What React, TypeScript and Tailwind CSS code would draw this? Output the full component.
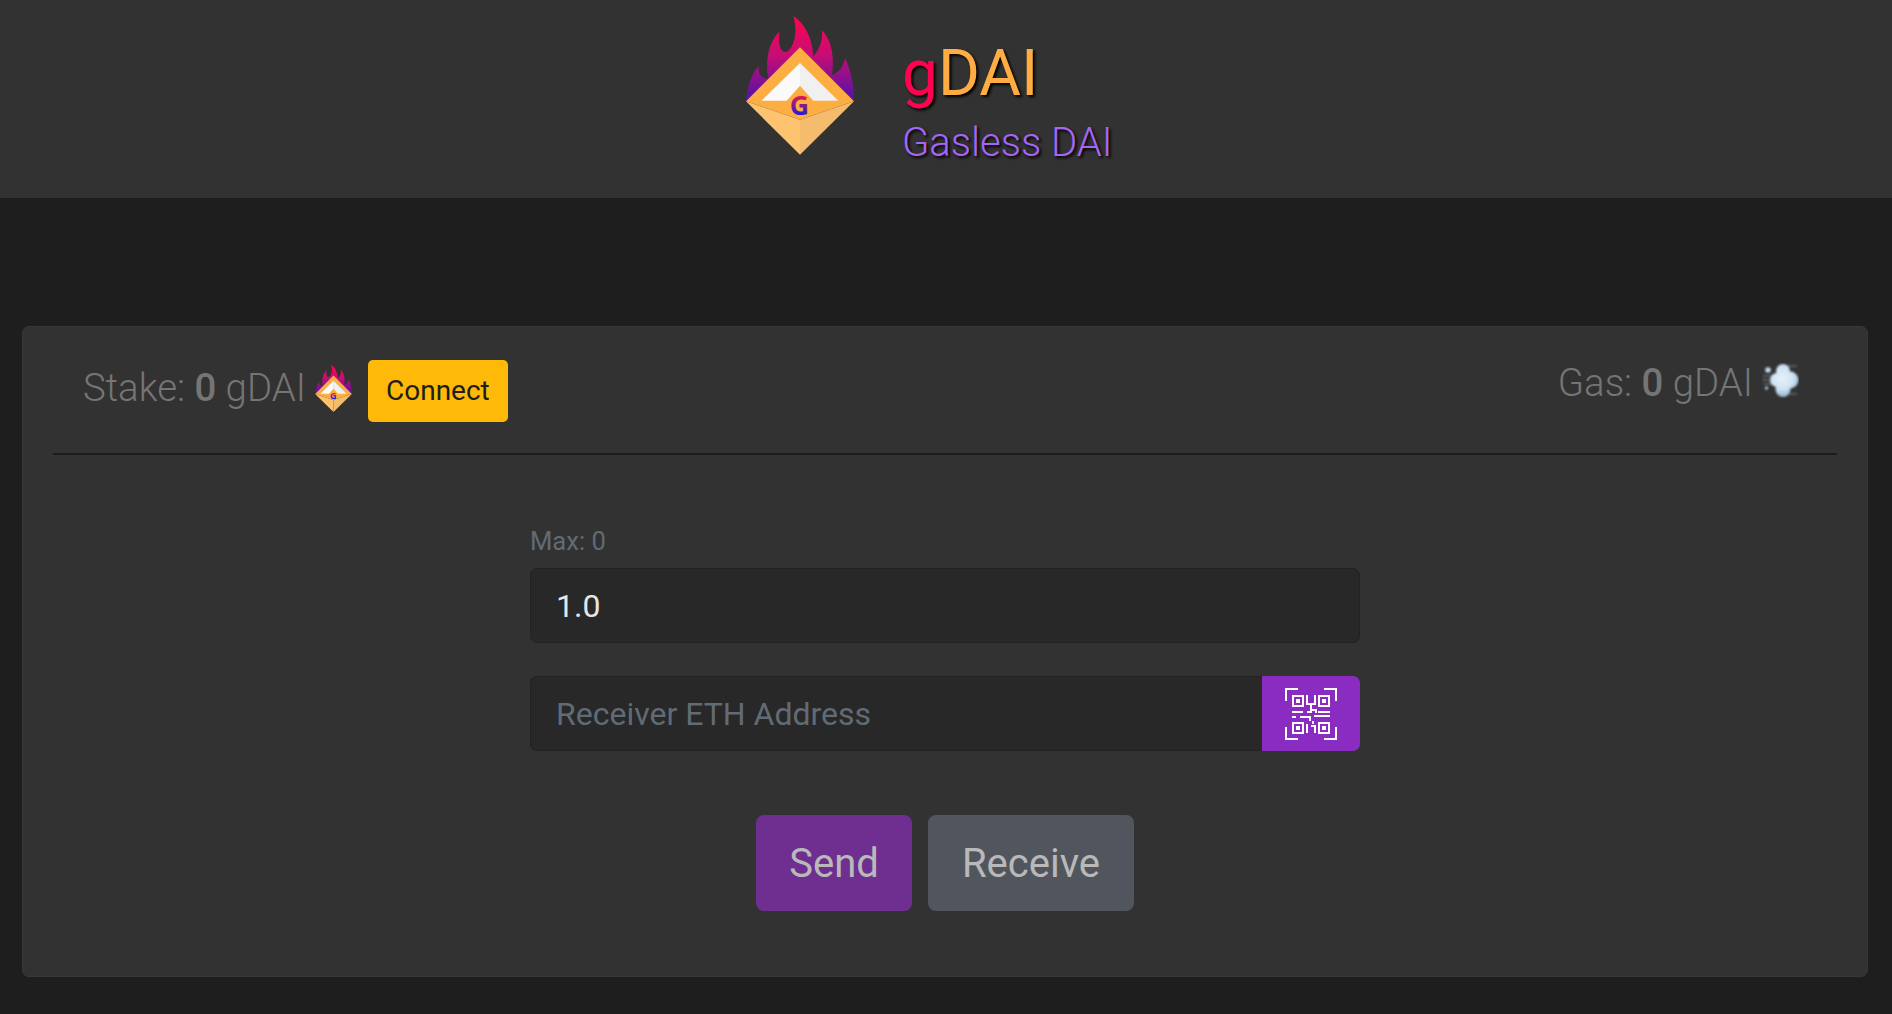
import { useId } from 'react';

function Logo({ className }: { className: string }) {
  const id = useId();
  return (
    <svg viewBox="48 35 324 415" className={className}>
      <defs>
        <linearGradient id={`${id}flame`} x1="0" y1="35" x2="0" y2="290" gradientUnits="userSpaceOnUse">
          <stop offset="0" stopColor="#ff0350" />
          <stop offset="0.45" stopColor="#c70d74" />
          <stop offset="1" stopColor="#4f12ad" />
        </linearGradient>
        <linearGradient id={`${id}g`} x1="0" y1="272" x2="0" y2="334" gradientUnits="userSpaceOnUse">
          <stop offset="0" stopColor="#e8174f" />
          <stop offset="1" stopColor="#1a1ae0" />
        </linearGradient>
      </defs>
      <path
        fill={`url(#${id}flame)`}
        d="M48 290C52 245 66 205 86 185C84 205 92 222 115 222C106 180 112 115 149 80C142 115 152 145 168 142C190 135 205 85 190 35C225 55 248 105 250 155C268 135 280 105 275 76C300 100 315 145 306 212C325 205 342 185 345 160C362 195 372 240 372 290Z"
      />
      <path fill="#fdae42" d="M210 128L372 290L210 345L48 290Z" />
      <path fill="#fec36f" d="M48 290L210 345V450Z" />
      <path fill="#f5bc6d" d="M372 290L210 345V450Z" />
      <path fill="#fafafa" d="M210 175V243L170 288H95Z" />
      <path fill="#f0f0f0" d="M210 175V243L250 288H325Z" />
      <text
        x="208"
        y="332"
        textAnchor="middle"
        fontSize="80"
        fontWeight="700"
        fontFamily="'Open Sans', sans-serif"
        fill={`url(#${id}g)`}
      >
        G
      </text>
    </svg>
  );
}

function GasIcon() {
  const id = useId();
  return (
    <svg viewBox="0 0 37 35" className="w-[37px] h-[35px]">
      <defs>
        <radialGradient id={`${id}puff`} gradientUnits="userSpaceOnUse" cx="20" cy="15" r="19">
          <stop offset="0" stopColor="#e6f1fa" />
          <stop offset="0.6" stopColor="#cfe2f2" />
          <stop offset="1" stopColor="#93b5d2" />
        </radialGradient>
        <filter id={`${id}soft`} x="-10%" y="-10%" width="120%" height="120%">
          <feGaussianBlur stdDeviation="0.8" />
        </filter>
      </defs>
      <g filter={`url(#${id}soft)`}>
        <g stroke="#b8cfe0" strokeWidth="1.2" opacity="0.55">
          <path d="M1 13H14M0 17H14M2 21H14M24 3H35M27 31H35" />
        </g>
        <g fill={`url(#${id}puff)`}>
          <circle cx="21" cy="8" r="7" />
          <circle cx="28" cy="17" r="8.5" />
          <circle cx="21" cy="26.5" r="7.5" />
          <circle cx="15" cy="17" r="7" />
        </g>
        <circle cx="6" cy="7" r="2.8" fill="#c4dcf0" />
        <circle cx="4.5" cy="25" r="1.6" fill="#c4dcf0" />
      </g>
    </svg>
  );
}

function QrIcon() {
  return (
    <svg viewBox="0 0 52 52" className="w-[52px] h-[52px]" fill="none" stroke="#fff" strokeWidth="2">
      <path d="M1 13V1H13M39 1H51V13M1 39V51H13M39 51H51V39" />
      <rect x="8" y="8" width="10" height="10" />
      <rect x="34" y="8" width="10" height="10" />
      <rect x="8" y="35" width="10" height="10" />
      <rect x="34" y="35" width="10" height="10" />
      <g fill="#fff" stroke="none">
        <rect x="11" y="11" width="4" height="4" />
        <rect x="37" y="11" width="4" height="4" />
        <rect x="11" y="38" width="4" height="4" />
        <rect x="37" y="38" width="4" height="4" />
      </g>
      <path d="M22 7V16H30V7M26 16V22H31V25M7 24H18M22 24H27M33 24H45M7 29H11M15 29H25V33M29 28H45M22 36V45M26 38H30V45M28 33V36" />
    </svg>
  );
}

export default function App() {
  return (
    <div className="min-h-[1014px] bg-[#1e1e1e] font-['Roboto',sans-serif] overflow-hidden">
      <header className="h-[198px] bg-[#323232] flex items-start pl-[746px]">
        <Logo className="w-[108px] h-[139px] mt-[16px]" />
        <div className="ml-[48px] mt-[36px]">
          <h1 className="text-[64px] leading-[76px] [text-shadow:2px_2px_3px_#000]">
            <span className="text-[#ff0350]">g</span>
            <span className="text-[#ffad42]">DAI</span>
          </h1>
          <p className="mt-[8px] text-[40px] leading-[46px] font-light text-[#a666f5] [text-shadow:2px_2px_3px_#000]">
            Gasless DAI
          </p>
        </div>
      </header>

      <main className="mt-[128px] ml-[22px] mr-[24px] h-[651px] bg-[#323232] border border-[#383838] rounded-[7px] px-[30px]">
        <div className="h-[128px] border-b-2 border-[#1c1c1c] flex justify-between pl-[30px] pr-[37px] pt-[33px]">
          <div className="flex items-center h-[62px]">
            <span className="text-[38.4px] leading-[46px] -mt-[7px] font-light text-[#757575]">
              Stake: <span className="font-medium">0</span> gDAI
            </span>
            <Logo className="w-[37px] h-[47px] ml-[9px] -mt-[6px]" />
            <button className="ml-[16px] w-[140px] h-[62px] bg-[#ffb908] rounded-[5px] text-[28px] text-[#1e1e1e]">
              Connect
            </button>
          </div>
          <div className="flex items-start h-[62px] -mr-[1px]">
            <span className="text-[38.4px] leading-[46px] font-light text-[#757575]">
              Gas: <span className="font-medium">0</span> gDAI
            </span>
            <span className="ml-[9px] mt-[3px] mr-[2px]">
              <GasIcon />
            </span>
          </div>
        </div>

        <div className="w-[830px] mx-auto pt-[72px] flex flex-col">
          <label className="text-[25.6px] leading-[28px] text-[#616b75]">Max: 0</label>
          <input
            defaultValue="1.0"
            className="mt-[13px] h-[75px] px-[25px] bg-[#282828] border border-[#222222] rounded-[7px] text-[32px] text-[#e6e6e6] outline-none"
          />
          <div className="mt-[33px] h-[75px] flex">
            <input
              placeholder="Receiver ETH Address"
              className="flex-1 min-w-0 px-[25px] bg-[#282828] border border-[#222222] border-r-0 rounded-l-[7px] text-[32px] text-[#e6e6e6] placeholder:text-[#616b75] outline-none"
            />
            <button className="w-[98px] bg-[#8a2bc2] rounded-r-[7px] flex items-center justify-center">
              <QrIcon />
            </button>
          </div>
          <div className="mt-[64px] flex justify-center gap-[16px]">
            <button className="w-[156px] h-[96px] pt-[2px] bg-[#6f2f91] rounded-[8px] text-[40px] text-[#b9b9b9]">Send</button>
            <button className="w-[206px] h-[96px] pt-[2px] bg-[#51565e] rounded-[8px] text-[40px] text-[#b9b9b9]">Receive</button>
          </div>
        </div>
      </main>
    </div>
  );
}
